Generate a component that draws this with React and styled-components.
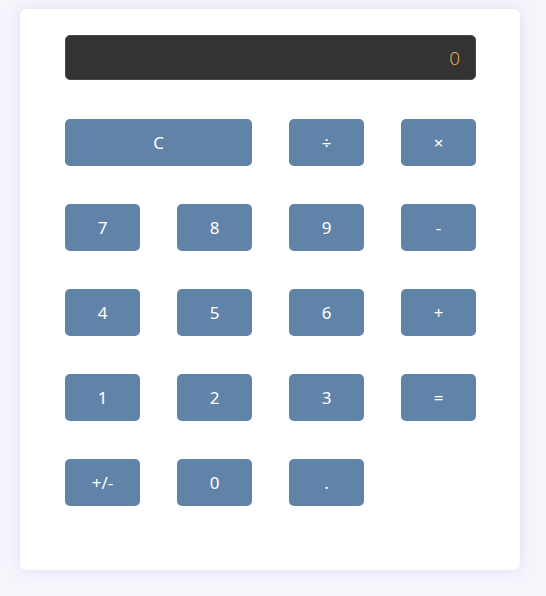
import { useState } from 'react';
import styled, { createGlobalStyle } from 'styled-components';

const GlobalStyle = createGlobalStyle`
  body {
    margin: 0;
    background: #f5f5fc;
    font-family: "Noto Sans", "Open Sans", sans-serif;
  }
`

const Page = styled.div`
  padding: 9px 0 0 20px;
  min-height: 587px;
`

const Card = styled.div`
  width: 500px;
  box-sizing: border-box;
  padding: 26px 44px 64px 45px;
  background: #fff;
  border-radius: 6px;
  box-shadow: 0 0 12px rgba(200, 205, 235, 0.55);
`

const Display = styled.div`
  height: 45px;
  box-sizing: border-box;
  background: #333;
  border: 1px solid #4a4a4a;
  border-radius: 5px;
  color: #e6a55a;
  font-size: 19px;
  font-weight: 300;
  display: flex;
  align-items: center;
  justify-content: flex-end;
  padding-right: 15px;
  margin-bottom: 39px;
`

const Keys = styled.div`
  display: grid;
  grid-template-columns: repeat(4, 75px);
  column-gap: 37px;
  row-gap: 38px;
`

const Key = styled.button`
  grid-column: span ${(p) => p.$span || 1};
  height: 47px;
  border: none;
  border-radius: 5px;
  background: #6283a8;
  color: #fff;
  font-family: "Noto Sans", "Open Sans", sans-serif;
  font-size: 17px;
  cursor: pointer;
`

const keys = [
  { label: 'C', span: 2 },
  { label: '÷' }, { label: '×' },
  { label: '7' }, { label: '8' }, { label: '9' }, { label: '-' },
  { label: '4' }, { label: '5' }, { label: '6' }, { label: '+' },
  { label: '1' }, { label: '2' }, { label: '3' }, { label: '=' },
  { label: '+/-' }, { label: '0' }, { label: '.' },
];

const App = () => {
  const [value] = useState('0');

  return (
    <Page>
      <GlobalStyle />
      <Card>
        <Display>{value}</Display>
        <Keys>
          {keys.map((k) => (
            <Key key={k.label} $span={k.span}>{k.label}</Key>
          ))}
        </Keys>
      </Card>
    </Page>
  );
};

export default App;
